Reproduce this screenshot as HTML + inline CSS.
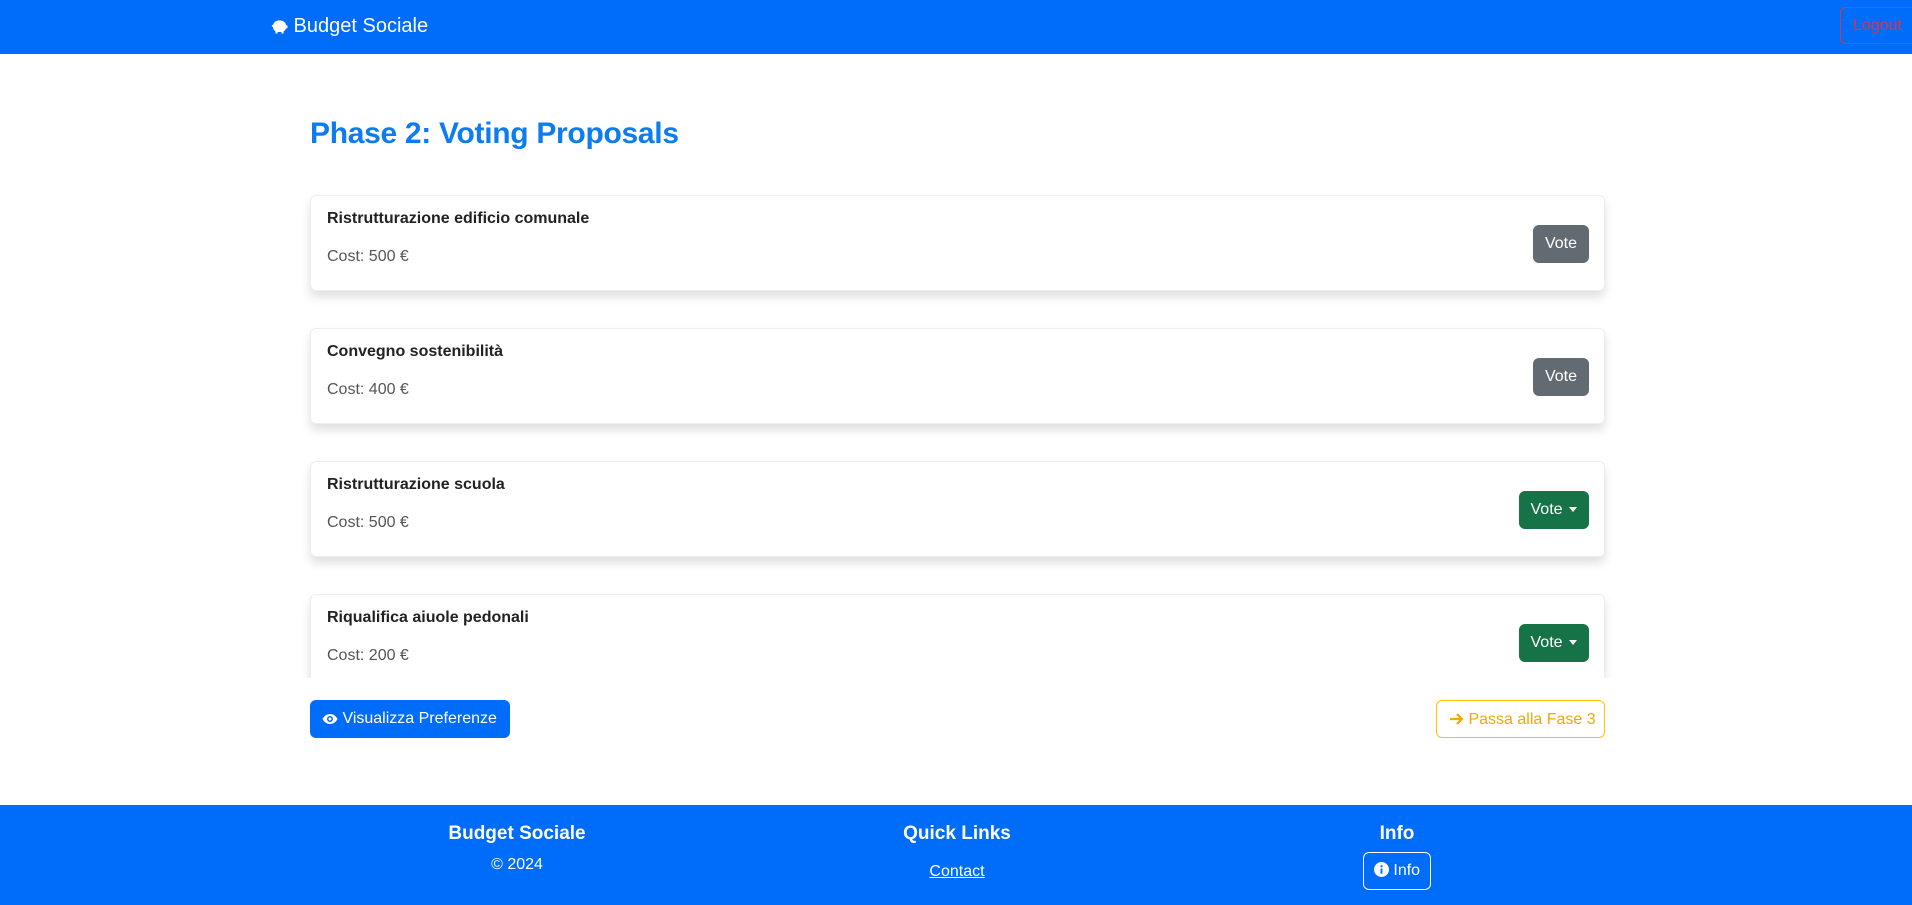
<!DOCTYPE html>
<html><head><meta charset="utf-8"><style>
*{box-sizing:border-box;margin:0;padding:0}
body{width:1912px;height:905px;overflow:hidden;font-family:"Liberation Sans",Arial,sans-serif;background:#fff;position:relative;color:#212529}
.nav{position:absolute;left:0;top:0;width:1912px;height:54px;background:#006cfa}
.brand{position:absolute;left:271px;top:15px;color:#fff;font-size:20px;white-space:nowrap}
.logout{position:absolute;left:1840px;top:7px;width:90px;height:37px;border:1px solid #dc3545;border-radius:6px;color:#dc3545;font-size:16px;padding:9px 12px}
h1{position:absolute;left:310px;top:117px;font-size:30px;font-weight:bold;color:#0d7cf2;letter-spacing:-0.3px}
.list{position:absolute;left:300px;top:183px;width:1320px;height:495px;overflow:hidden}
.card{position:absolute;left:10px;width:1295px;height:96px;background:#fff;border:1px solid #eee;border-radius:6px;box-shadow:0 6px 10px rgba(0,0,0,.13)}
.t{position:absolute;left:16px;top:14px;font-weight:bold;font-size:16px;color:#222}
.c{position:absolute;left:16px;top:52px;font-size:16px;color:#555}
.v{position:absolute;right:15px;top:29px;height:38px;border-radius:6px;color:#fff;font-size:16px;padding:10px 12px;white-space:nowrap}
.g{background:#626b72}.gr{background:#157347}
.caret{display:inline-block;width:0;height:0;border-left:4px solid transparent;border-right:4px solid transparent;border-top:5px solid #fff;vertical-align:middle;margin-left:2px}
.b1{position:absolute;left:310px;top:700px;width:200px;height:38px;background:#006cfa;border-radius:6px;color:#fff;font-size:16px;padding:10px 12px;white-space:nowrap}
.b2{position:absolute;left:1436px;top:700px;width:169px;height:38px;border:1px solid #ffc107;border-radius:6px;color:#f5a800;font-size:16px;padding:10px 12px;white-space:nowrap}
svg{vertical-align:-2px}
.foot{position:absolute;left:0;top:805px;width:1912px;height:100px;background:#006cfa;color:#fff;text-align:center}
.col{position:absolute;top:18px;width:300px}
.col h5{font-size:19px;font-weight:bold}
.ib{display:inline-block;border:1px solid #fff;border-radius:6px;padding:9px 10px;font-size:16px;white-space:nowrap}
</style></head><body>
<div class="nav"><div class="brand"><svg width="17" height="15" viewBox="0 0 17 15"><path d="M2 6C3 2 7 1 10 1.5C13 2 15 4 15 6L16.5 6.5L16.5 9L15 9.5C14.5 11 13.5 12 12.5 12.5L12.5 14.5L10.5 14.5L10.5 13L6.5 13L6.5 14.5L4.5 14.5L4.5 12.5C3 11.5 2 10 2 8C1 8 0.5 7 1 6Z" fill="#fff"/></svg> Budget Sociale</div><div class="logout">Logout</div></div>
<h1>Phase 2: Voting Proposals</h1>
<div class="list">
<div class="card" style="top:12px"><div class="t">Ristrutturazione edificio comunale</div><div class="c">Cost: 500 €</div><div class="v g">Vote</div></div>
<div class="card" style="top:145px"><div class="t">Convegno sostenibilità</div><div class="c">Cost: 400 €</div><div class="v g">Vote</div></div>
<div class="card" style="top:278px"><div class="t">Ristrutturazione scuola</div><div class="c">Cost: 500 €</div><div class="v gr">Vote <span class="caret"></span></div></div>
<div class="card" style="top:411px"><div class="t">Riqualifica aiuole pedonali</div><div class="c">Cost: 200 €</div><div class="v gr">Vote <span class="caret"></span></div></div>
</div>
<div class="b1"><svg width="16" height="12" viewBox="0 0 16 12"><path d="M8 1C4 1 1.5 4 0.5 6C1.5 8 4 11 8 11C12 11 14.5 8 15.5 6C14.5 4 12 1 8 1Z" fill="#fff"/><circle cx="8" cy="6" r="3" fill="#006cfa"/><circle cx="8" cy="6" r="1.5" fill="#fff"/></svg> Visualizza Preferenze</div>
<div class="b2"><svg width="15" height="14" viewBox="0 0 15 14"><path d="M1 7H13M8 2L13 7L8 12" stroke="#f5a800" stroke-width="2.2" fill="none"/></svg> Passa alla Fase 3</div>
<div class="foot">
<div class="col" style="left:367px"><h5>Budget Sociale</h5><div style="margin-top:11px;font-size:16px">© 2024</div></div>
<div class="col" style="left:807px"><h5>Quick Links</h5><div style="margin-top:18px;font-size:16px;text-decoration:underline">Contact</div></div>
<div class="col" style="left:1247px"><h5>Info</h5><div class="ib" style="margin-top:7px"><svg width="15" height="15" viewBox="0 0 16 16"><circle cx="8" cy="8" r="8" fill="#fff"/><rect x="7" y="7" width="2" height="5.5" fill="#006cfa"/><circle cx="8" cy="4.5" r="1.2" fill="#006cfa"/></svg> Info</div></div>
</div>
</body></html>
